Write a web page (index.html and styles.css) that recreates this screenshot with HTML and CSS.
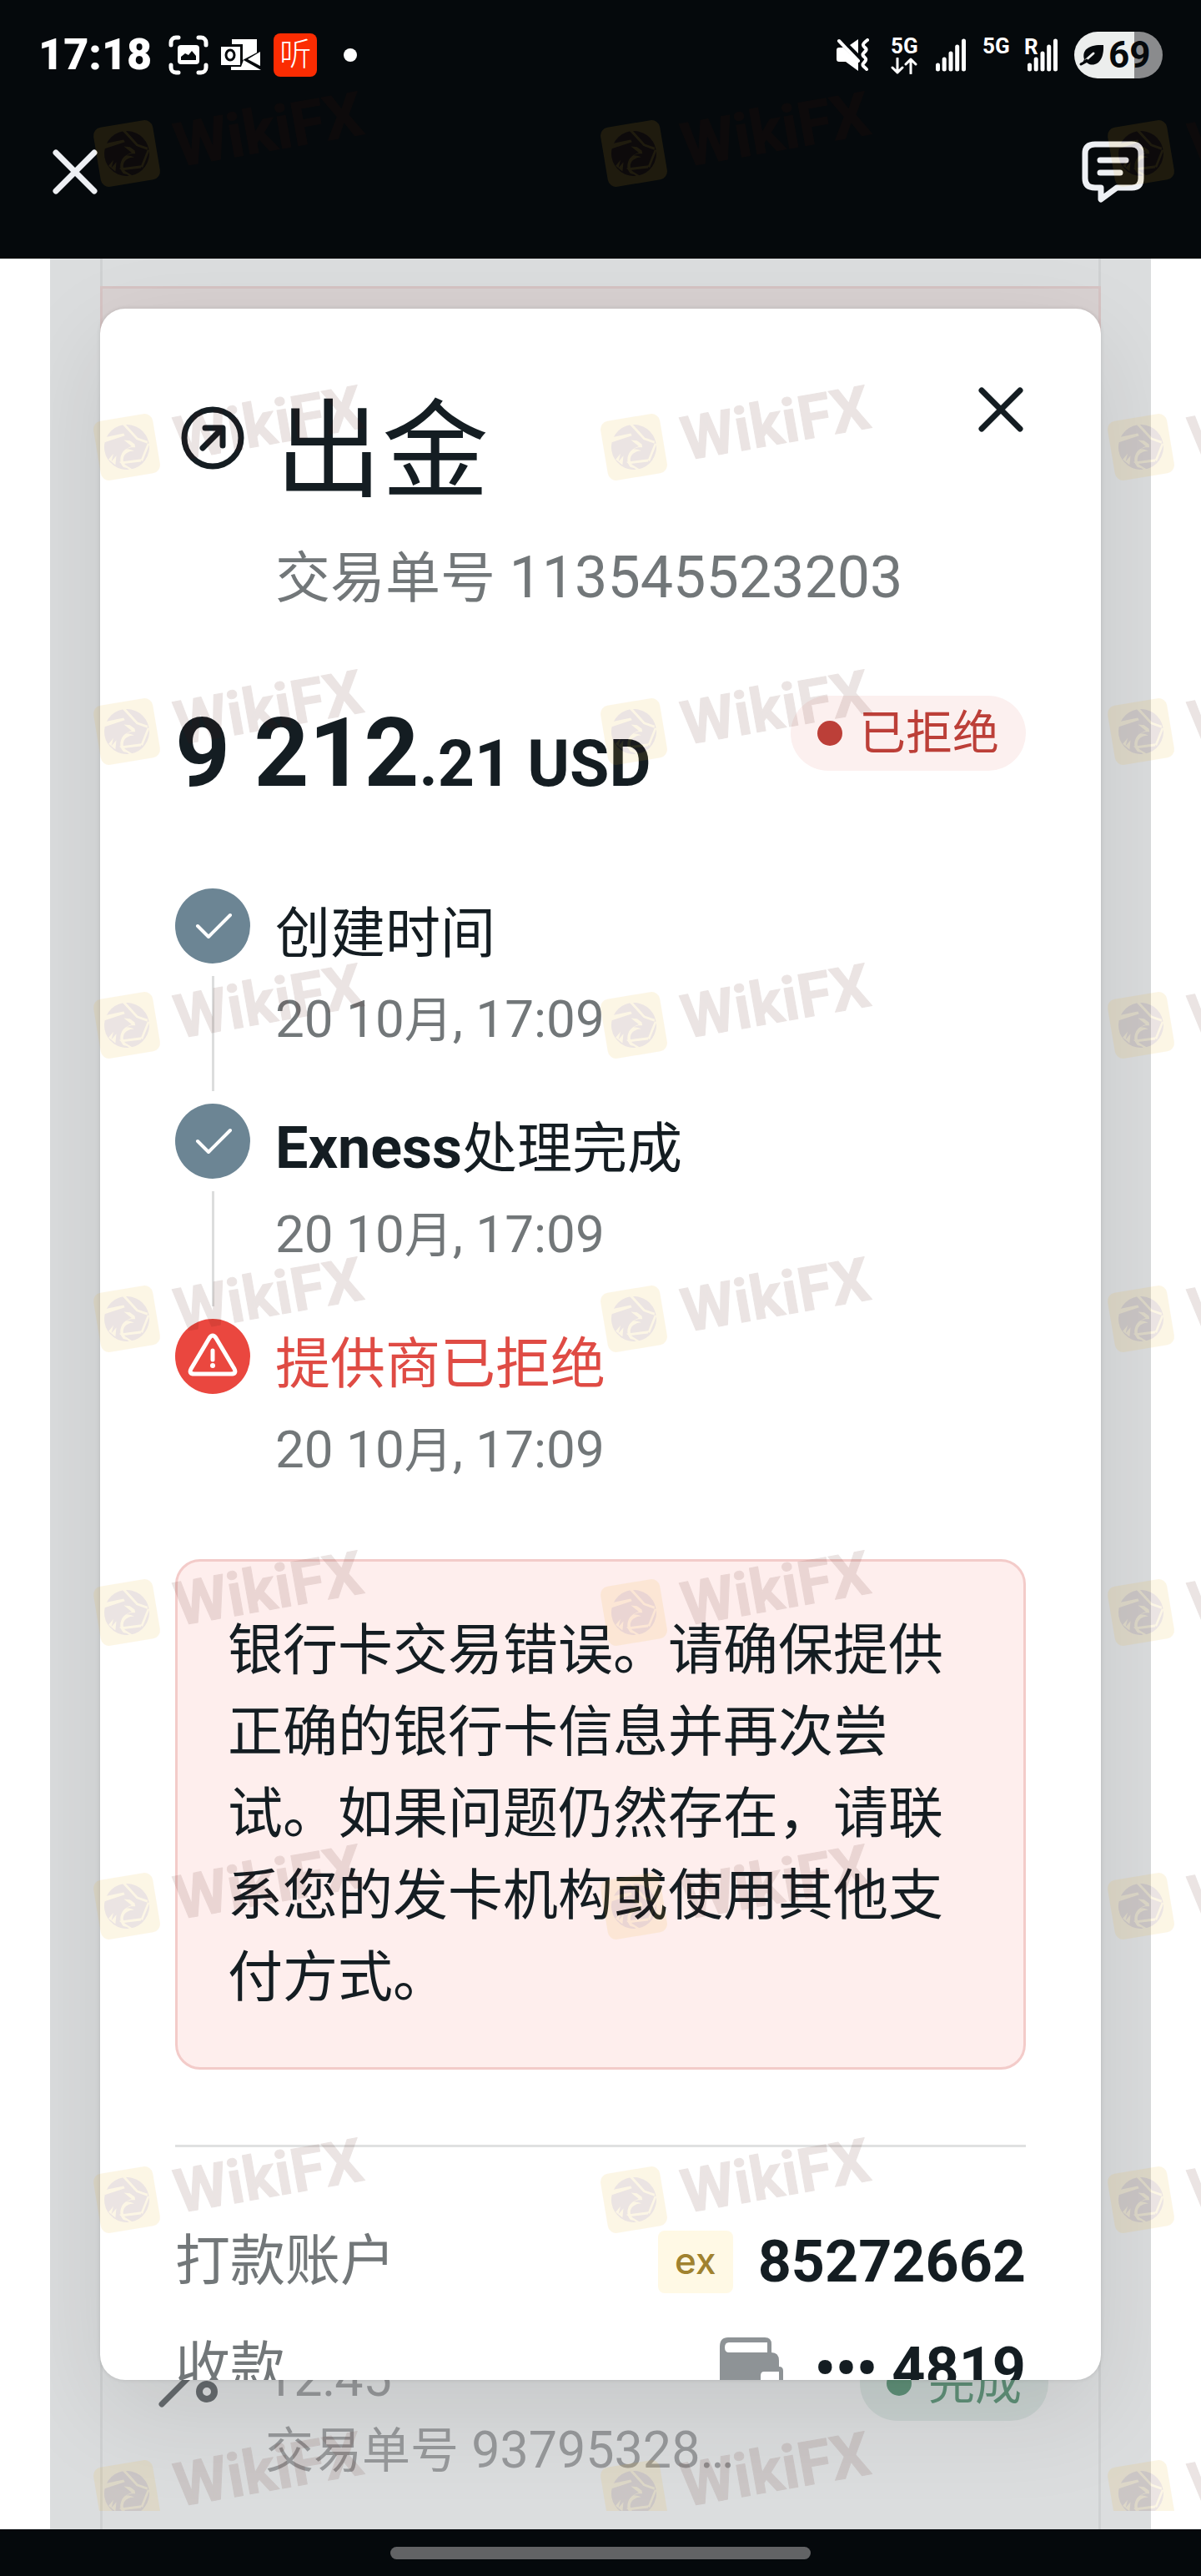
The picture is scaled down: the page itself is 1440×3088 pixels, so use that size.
FILE: index.html
```html
<!DOCTYPE html>
<html lang="zh-CN">
<head>
<meta charset="utf-8">
<meta name="viewport" content="width=device-width, initial-scale=1">
<title>出金</title>
<link rel="stylesheet" href="styles.css">
</head>
<body>
<svg class="defs" width="0" height="0" aria-hidden="true">
  <defs>
    <symbol id="check" viewBox="0 0 90 90"><path d="M27 45l13 13 26-26" fill="none" stroke="#fff" stroke-width="4" stroke-linecap="round" stroke-linejoin="round"/></symbol>
    <symbol id="signal" viewBox="0 0 36 40"><path d="M2.5 32v5M10.200 25v12M18 18v19M25.700 10v27M33.500 3v34" fill="none" stroke="#fff" stroke-width="5" stroke-linecap="round"/></symbol>
    <g id="brand" transform="rotate(-9.5 52 84)">
      <path fill="#edb020" fill-rule="evenodd" d="M26 48h52a10 10 0 0 1 10 10v52a10 10 0 0 1-10 10H26a10 10 0 0 1-10-10V58a10 10 0 0 1 10-10z"/>
      <circle cx="52" cy="84" r="27" fill="#4f140a"/>
      <g fill="#edb020">
        <path d="M51 56l3-1 13 20 11 6-1 3-12-7z"/>
        <path d="M77 84h3L68 104l-2-2z"/>
        <path d="M67 101l-1 3-21-1 10 9-3 1-12-13z"/>
        <path d="M26 74l26-4-1-3-22 1z"/>
        <path d="M50 75l7 2 5 5v4l-5-1-6 1c4 1 7 2 9 4-6-1-12 1-14 6-2 4 0 9 3 13l-5-2c-3-5-3-10 0-15 3-5 8-7 14-8z"/>
        <path d="M28 95l7-6-4 9 7-6-3 11z"/>
      </g>
    </g>
  </defs>
</svg>

<header class="topbar">
  <div class="status">
    <div class="status-left">
      <time class="clock">17:18</time>
      <svg width="48" height="48" viewBox="0 0 48 48" aria-hidden="true"><path d="M3 12V9a6 6 0 0 1 6-6h3M36 3h3a6 6 0 0 1 6 6v3M45 36v3a6 6 0 0 1-6 6h-3M12 45H9a6 6 0 0 1-6-6v-3" fill="none" stroke="#fff" stroke-width="5" stroke-linecap="round"/><rect x="11" y="12" width="26" height="23" rx="4" fill="#fff"/><path d="M15 30v-4l5-4 4 2 4-5 5 6v5z" fill="#05090c"/></svg>
      <svg width="50" height="40" viewBox="0 0 50 40" aria-hidden="true"><path d="M14 1h30v16L27 26V7H14zM33 25l15-9v17zM13 38v-4h12l3-8 21 12z" fill="#fff"/><path d="M1 10h23v22H1z" fill="#fff"/><ellipse cx="12" cy="20" rx="5" ry="6" fill="none" stroke="#05090c" stroke-width="3"/></svg>
      <span class="listen">听</span>
      <span class="more-dot"></span>
    </div>
    <div class="status-right">
      <svg width="40" height="40" viewBox="0 0 40 40" aria-hidden="true"><path d="M1 14q0-3 3-3h5L27 28v11L12 28H4q-3 0-3-3z" fill="#fff"/><path d="M17 8l10-7v17z" fill="#fff"/><path d="M4 3l23 24" stroke="#fff" stroke-width="4" stroke-linecap="round"/><path d="M38 2c-8 6-5 7-2 10s-6 6-3 9 5 4 1 8 1 5 3 8" fill="none" stroke="#fff" stroke-width="4" stroke-linecap="round"/></svg>
      <span class="net net-data">5G<svg width="32" height="20" viewBox="0 0 32 20" aria-hidden="true"><path d="M8 1v17M2 12l6 6 6-6M24 19V2M18 8l6-6 6 6" fill="none" stroke="#fff" stroke-width="3" stroke-linecap="round" stroke-linejoin="round"/></svg></span>
      <svg width="36" height="40" aria-hidden="true"><use href="#signal"/></svg>
      <span class="net">5G</span>
      <span class="roaming"><svg width="36" height="40" aria-hidden="true"><use href="#signal"/></svg><span class="roaming-mark">R</span></span>
      <span class="battery"><svg width="32" height="28" viewBox="0 0 32 28" aria-hidden="true"><path d="M7 19C4 8 12 1 30 2c1 16-6 26-17 23l-3-2-6 3" fill="#05090c"/><path d="M9 20l9-8" stroke="#eceeed" stroke-width="3" stroke-linecap="round"/><path d="M3 25c3-1 5-3 7-5" fill="none" stroke="#05090c" stroke-width="3" stroke-linecap="round"/></svg>69</span>
    </div>
  </div>
  <nav class="toolbar">
    <button class="icon-btn" type="button" aria-label="返回"><svg width="54" height="54" viewBox="0 0 54 54"><path d="M4 4l46 46M50 4L4 50" stroke="#eef0f4" stroke-width="7" stroke-linecap="round"/></svg></button>
    <button class="icon-btn" type="button" aria-label="聊天"><svg width="76" height="74" viewBox="0 0 76 74"><path d="M16 4h44q11 0 11 11v30q0 11-11 11H42L23 70V56h-7Q4 56 4 45V15Q4 4 16 4z" fill="none" stroke="#eef0f4" stroke-width="7" stroke-linejoin="round"/><path d="M22 23h31M22 38h24" stroke="#eef0f4" stroke-width="7" stroke-linecap="round"/></svg></button>
  </nav>
</header>

<main class="stage">
  <section class="history" aria-hidden="true">
    <div class="history-alert"></div>
    <div class="history-row">
      <svg width="72" height="80" viewBox="0 0 72 80"><path d="M4 74L40 38" stroke="#666b6e" stroke-width="7" stroke-linecap="round"/><circle cx="58" cy="59" r="9" fill="none" stroke="#666b6e" stroke-width="8"/></svg>
      <div class="history-text"><p>12:45</p><p><span class="cjk">交易单号</span> 93795328…</p></div>
      <span class="badge badge-done">完成</span>
    </div>
  </section>

  <section class="card" role="dialog" aria-labelledby="title">
    <div class="card-head">
      <span class="lead"><svg width="76" height="76" viewBox="0 0 76 76" aria-hidden="true"><circle cx="38" cy="38" r="34" fill="none" stroke="#141d22" stroke-width="7"/><path d="M26 50l23-23M29 26h21v21" fill="none" stroke="#141d22" stroke-width="7" stroke-linecap="round" stroke-linejoin="round"/></svg></span>
      <div class="head-text">
        <h1 id="title">出金</h1>
        <p class="order">交易单号 <span class="num">113545523203</span></p>
      </div>
      <button class="icon-btn close" type="button" aria-label="关闭"><svg width="54" height="54" viewBox="0 0 54 54"><path d="M4 4l46 46M50 4L4 50" stroke="#141d22" stroke-width="7" stroke-linecap="round"/></svg></button>
    </div>

    <div class="amount-row">
      <p class="amount">9 212<span class="fraction">.21 USD</span></p>
      <span class="badge badge-rejected">已拒绝</span>
    </div>

    <ol class="steps">
      <li class="step"><span class="marker"><svg class="disc" aria-hidden="true"><use href="#check"/></svg></span><div><h2>创建时间</h2><p class="date">20 10<span class="month">月</span>, 17:09</p></div></li>
      <li class="step"><span class="marker"><svg class="disc" aria-hidden="true"><use href="#check"/></svg></span><div><h2><b class="num">Exness</b>处理完成</h2><p class="date">20 10<span class="month">月</span>, 17:09</p></div></li>
      <li class="step failed"><span class="marker"><svg class="disc" viewBox="0 0 90 90" aria-hidden="true"><path d="M41 23q4-6 8 0l22 37q3 6-4 6H23q-7 0-4-6z" fill="none" stroke="#fff" stroke-width="5" stroke-linejoin="round"/><path d="M45 38v11" stroke="#fff" stroke-width="5" stroke-linecap="round"/><circle cx="45" cy="56" r="3" fill="#fff"/></svg></span><div><h2>提供商已拒绝</h2><p class="date">20 10<span class="month">月</span>, 17:09</p></div></li>
    </ol>

    <p class="alert">银行卡交易错误。请确保提供正确的银行卡信息并再次尝试。如果问题仍然存在，请联系您的发卡机构或使用其他支付方式。</p>

    <dl class="details">
      <div class="detail"><dt>打款账户</dt><dd><span class="ex">ex</span>85272662</dd></div>
      <div class="detail"><dt>收款</dt><dd><svg width="90" height="75" viewBox="0 0 90 75" aria-hidden="true"><path fill="#8e9396" fill-rule="evenodd" d="M17 0h44q8 0 8 8v10q9 0 9 10v7q5 0 5 5v23q0 5-5 5 0 7-8 7H17Q7 75 7 65V11Q7 0 17 0zM18 6q-5 0-5 6t5 6h46V6zM60 41q-4 0-4 5v10q0 5 4 5h18V41z"/></svg>••• 4819</dd></div>
    </dl>
  </section>
</main>

<footer class="homebar"><span class="home-pill"></span></footer>

<div class="marks" aria-hidden="true">
  <svg class="mark"><use href="#brand"/><text>WikiFX</text></svg><svg class="mark"><use href="#brand"/><text>WikiFX</text></svg><svg class="mark"><use href="#brand"/><text>WikiFX</text></svg>
  <svg class="mark"><use href="#brand"/><text>WikiFX</text></svg><svg class="mark"><use href="#brand"/><text>WikiFX</text></svg><svg class="mark"><use href="#brand"/><text>WikiFX</text></svg>
  <svg class="mark"><use href="#brand"/><text>WikiFX</text></svg><svg class="mark"><use href="#brand"/><text>WikiFX</text></svg><svg class="mark"><use href="#brand"/><text>WikiFX</text></svg>
  <svg class="mark"><use href="#brand"/><text>WikiFX</text></svg><svg class="mark"><use href="#brand"/><text>WikiFX</text></svg><svg class="mark"><use href="#brand"/><text>WikiFX</text></svg>
  <svg class="mark"><use href="#brand"/><text>WikiFX</text></svg><svg class="mark"><use href="#brand"/><text>WikiFX</text></svg><svg class="mark"><use href="#brand"/><text>WikiFX</text></svg>
  <svg class="mark"><use href="#brand"/><text>WikiFX</text></svg><svg class="mark"><use href="#brand"/><text>WikiFX</text></svg><svg class="mark"><use href="#brand"/><text>WikiFX</text></svg>
  <svg class="mark"><use href="#brand"/><text>WikiFX</text></svg><svg class="mark"><use href="#brand"/><text>WikiFX</text></svg><svg class="mark"><use href="#brand"/><text>WikiFX</text></svg>
  <svg class="mark"><use href="#brand"/><text>WikiFX</text></svg><svg class="mark"><use href="#brand"/><text>WikiFX</text></svg><svg class="mark"><use href="#brand"/><text>WikiFX</text></svg>
  <svg class="mark"><use href="#brand"/><text>WikiFX</text></svg><svg class="mark"><use href="#brand"/><text>WikiFX</text></svg><svg class="mark"><use href="#brand"/><text>WikiFX</text></svg>
</div>
</body>
</html>
```

FILE: styles.css
```css
* { box-sizing: border-box; margin: 0; padding: 0; }

body {
  position: relative;
  display: flex;
  flex-direction: column;
  height: 100vh;
  overflow: hidden;
  background: #fff;
  color: #141d22;
  font-family: Roboto, "Noto Sans CJK SC", sans-serif;
  font-size: 66px;
}

svg { display: block; flex: none; }
.defs { position: absolute; }
.num { font-size: 70px; line-height: 1; }
.icon-btn { border: 0; background: none; cursor: pointer; }

/* Top bar */
.topbar { flex: none; background: #05090c; color: #fff; padding-bottom: 30px; }
.status { display: flex; justify-content: space-between; padding: 0 46px; height: 132px; align-items: center; }
.status-left, .status-right { display: flex; align-items: center; }
.status-left { gap: 14px; }
.status-right { gap: 20px; }
.clock { font-size: 52px; font-weight: 900; line-height: 60px; margin-right: 6px; }
.listen {
  width: 52px; height: 52px; border-radius: 8px; background: #fb2c02;
  font-size: 38px; line-height: 50px; text-align: center; font-weight: 300;
}
.more-dot { width: 16px; height: 16px; border-radius: 8px; background: #fff; margin-left: 18px; }
.net { height: 44px; font-size: 26px; line-height: 22px; font-weight: 700; width: 34px; }
.net-data { margin-left: 6px; }
.net-data svg { margin-top: 3px; }
.roaming { position: relative; }
.roaming-mark { position: absolute; left: -4px; top: 0; font-size: 26px; line-height: 20px; font-weight: 700; }
.battery {
  display: flex; align-items: center; gap: 4px;
  width: 106px; height: 56px; padding-left: 5px; border-radius: 28px;
  background: linear-gradient(90deg, #eceeed 68%, #8a8b8d 68%);
  color: #05090c; font-size: 44px; font-weight: 700;
}
.toolbar { display: flex; justify-content: space-between; align-items: center; height: 148px; padding: 0 67px 0 63px; }

/* Page behind the dialog */
.stage {
  position: relative;
  flex: 1;
  min-height: 0;
  margin: 0 60px;
  padding: 0 60px;
  overflow: hidden;
  background: #dbddde;
}
.history {
  display: flex; flex-direction: column; justify-content: space-between;
  height: 100%;
  padding: 33px 0 52px;
  border: solid #cfd1d2; border-width: 0 3px;
}
.history-alert { height: 240px; margin: 0 -3px; border: 3px solid #d5c3c3; background: #d8d1d1; }
.history-row { display: flex; align-items: flex-start; padding: 0 60px 0 67px; color: #97999b; font-size: 61px; line-height: 86px; }
.history-text { flex: 1; margin-left: 56px; }
.cjk { font-size: 58px; line-height: 1; }

.badge {
  display: flex; align-items: center; gap: 20px;
  height: 90px; padding: 0 32px; border-radius: 45px;
  font-size: 56px; line-height: 90px; white-space: nowrap;
}
.badge::before { content: ""; width: 30px; height: 30px; border-radius: 15px; background: currentColor; }
.badge-rejected { background: #fcf0ef; color: #bc3f38; }
.badge-done { margin-top: 4px; background: #c9d2d0; color: #5f9078; }

/* Dialog */
.card {
  position: absolute;
  inset: 60px 60px 179px;
  overflow: hidden;
  padding: 94px 90px 0;
  border-radius: 30px;
  background: #fff;
  box-shadow: 0 0 5px rgba(0, 0, 0, .12), 0 40px 120px rgba(0, 0, 0, .1);
}
.card-head { display: flex; align-items: flex-start; gap: 30px; }
.lead { display: flex; justify-content: center; width: 90px; margin-top: 23px; }
.head-text { flex: 1; margin-top: 8px; }
h1 { font-size: 128px; font-weight: 400; line-height: 140px; }
.order { margin-top: 34px; line-height: 96px; color: #727779; }
.close { margin-right: 3px; }

.amount-row { display: flex; justify-content: space-between; align-items: flex-start; margin-top: 92px; }
.amount { font-size: 115px; font-weight: 700; line-height: 138px; }
.fraction { font-size: 77px; line-height: 1; }

.steps { list-style: none; margin-top: 93px; }
.step { display: flex; gap: 30px; height: 258px; }
.marker { display: flex; flex-direction: column; align-items: center; gap: 15px; width: 90px; }
.marker::after { content: ""; width: 3px; height: 138px; background: #dcdddd; }
.failed .marker::after { content: none; }
.disc { width: 90px; height: 90px; border-radius: 45px; background: #6c8594; }
.failed .disc { background: #ea473f; }
h2 { margin-top: 15px; font-size: 66px; font-weight: 400; line-height: 80px; }
.failed h2 { color: #df4b44; }
.date { margin-top: 22px; font-size: 62px; line-height: 80px; color: #727779; }
.month { font-size: 58px; line-height: 1; }

.alert {
  margin-top: 30px;
  padding: 58px 60px;
  border: 3px solid #f3cbc9;
  border-radius: 30px;
  background: #feeeed;
  line-height: 98px;
}

.details { margin-top: 90px; border-top: 3px solid #e0e1e1; padding-top: 73px; }
.detail { display: flex; justify-content: space-between; align-items: center; height: 128px; }
dt { color: #727779; line-height: 80px; }
dd { display: flex; align-items: center; gap: 30px; font-size: 70px; font-weight: 700; line-height: 80px; }
.ex { width: 90px; height: 75px; border-radius: 8px; background: #fff9e5; color: #a0822f; font: 500 44px/72px Inter, sans-serif; text-align: center; }

/* Gesture bar */
.homebar { flex: none; display: flex; justify-content: center; height: 56px; padding-top: 21px; background: #05090c; }
.home-pill { width: 35%; height: 15px; border-radius: 8px; background: #626365; }

/* Watermark laid over the whole screen */
.marks {
  position: absolute;
  inset: 100px 0 78px 100px;
  display: grid;
  grid-template-columns: repeat(3, 608px);
  grid-template-rows: 352px 341px;
  grid-auto-rows: 352px;
  overflow: hidden;
  pointer-events: none;
}
.mark { width: 360px; height: 140px; overflow: visible; opacity: .11; }
.mark text {
  fill: #4f140a; stroke: #4f140a; stroke-width: 1px; stroke-linejoin: round;
  font-size: 73px; font-weight: 700;
  transform: translate(114px, 100px) rotate(-10deg);
}
```
